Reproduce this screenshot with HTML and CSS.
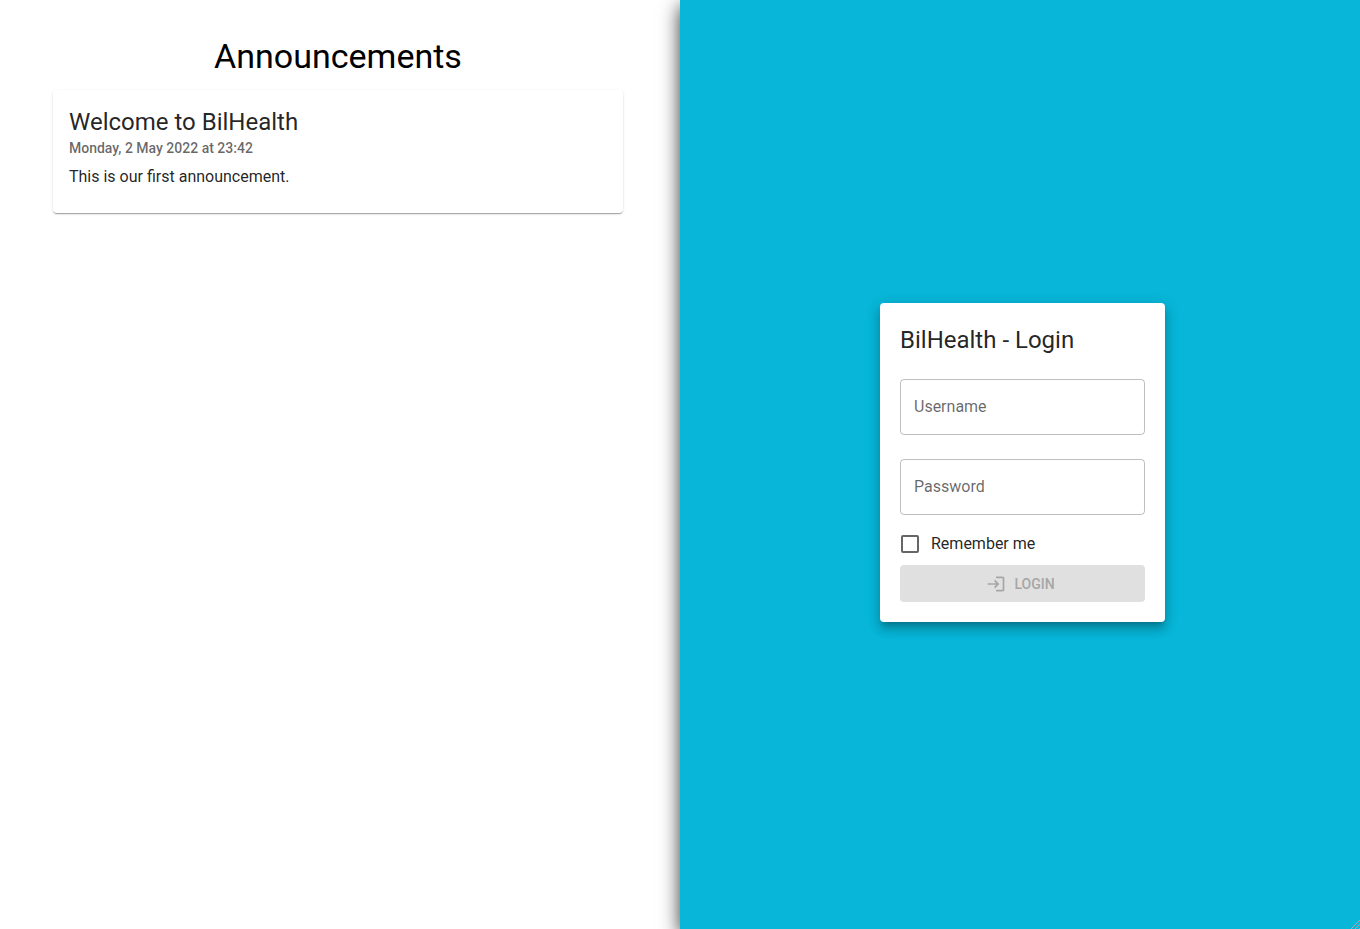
FILE: index.html
```html
<!DOCTYPE html>
<html lang="en">
<head>
<meta charset="utf-8">
<meta name="viewport" content="width=device-width, initial-scale=1">
<title>BilHealth</title>
<link rel="stylesheet" href="styles.css">
</head>
<body>
<div class="landing">
  <main class="news">
    <h1 class="news-title">Announcements</h1>
    <article class="announcement">
      <h2 class="heading">Welcome to BilHealth</h2>
      <time class="announcement-date" datetime="2022-05-02T23:42">Monday, 2 May 2022 at 23:42</time>
      <p class="announcement-body">This is our first announcement.</p>
    </article>
  </main>
  <aside class="side">
    <form class="login">
      <h2 class="heading">BilHealth - Login</h2>
      <div class="field">
        <input class="field-input" id="username" type="text" placeholder=" " autocomplete="username">
        <label class="field-label" for="username">Username</label>
      </div>
      <div class="field">
        <input class="field-input" id="password" type="password" placeholder=" " autocomplete="current-password">
        <label class="field-label" for="password">Password</label>
      </div>
      <div class="actions">
        <label class="remember" for="remember"><input class="remember-box" id="remember" type="checkbox">Remember me</label>
        <button class="submit" type="submit" disabled>
          <svg class="submit-icon" viewBox="0 0 24 24" aria-hidden="true"><path d="M11 7 9.6 8.4l2.6 2.6H2v2h10.2l-2.6 2.6L11 17l5-5-5-5zm9 12h-8v2h8c1.1 0 2-.9 2-2V5c0-1.1-.9-2-2-2h-8v2h8v14z"/></svg>
          LOGIN
        </button>
      </div>
    </form>
    <svg class="corner" viewBox="0 0 10 10" aria-hidden="true"><path d="M0 11 11 0M4 11l7-7M8 11l3-3"/></svg>
  </aside>
</div>
</body>
</html>
```
FILE: styles.css
```css
* {
  box-sizing: border-box;
}

body {
  margin: 0;
  font-family: Roboto, "Liberation Sans", sans-serif;
  font-size: 16px;
  line-height: 24px;
  color: rgba(0, 0, 0, 0.87);
  background: #fff;
}

h1, h2, p {
  margin: 0;
}

.landing {
  display: grid;
  grid-template-columns: 1fr 1fr;
  min-height: 100vh;
}

.news {
  padding: 36px 57px 36px 53px;
}

.news-title {
  margin-bottom: 14px;
  font-size: 34px;
  font-weight: 400;
  line-height: 40px;
  text-align: center;
  color: #000;
}

.heading {
  font-size: 24px;
  font-weight: 400;
  line-height: 32px;
}

.announcement {
  padding: 16px 16px 24px;
  border-radius: 4px;
  background: #fff;
  box-shadow: 0 2px 1px -1px rgba(0, 0, 0, 0.2), 0 1px 1px rgba(0, 0, 0, 0.14), 0 1px 3px rgba(0, 0, 0, 0.12);
}

.announcement-date {
  display: block;
  margin-bottom: 7px;
  font-size: 14px;
  font-weight: 500;
  line-height: 20px;
  color: rgba(0, 0, 0, 0.6);
}

.side {
  position: relative;
  display: flex;
  align-items: center;
  justify-content: center;
  padding: 0 0 4px 5px;
  background: #07b6d8;
  box-shadow: 0 6px 18px rgba(0, 0, 0, 0.8);
}

.login {
  display: flex;
  flex-direction: column;
  gap: 24px;
  width: 285px;
  padding: 21px 20px 20px;
  border-radius: 4px;
  background: #fff;
  box-shadow: 0 5px 5px -3px rgba(0, 0, 0, 0.2), 0 8px 10px 1px rgba(0, 0, 0, 0.14), 0 3px 14px 2px rgba(0, 0, 0, 0.12);
}

.login .heading {
  margin-bottom: -1px;
}

.field {
  display: grid;
  align-items: center;
}

.field-input,
.field-label {
  grid-area: 1 / 1;
}

.field-input {
  width: 100%;
  height: 56px;
  padding: 0 14px;
  border: 1px solid rgba(0, 0, 0, 0.25);
  border-radius: 4px;
  background: transparent;
  font: inherit;
  color: inherit;
}

.field-label {
  padding: 0 14px;
  color: rgba(0, 0, 0, 0.6);
  pointer-events: none;
}

.field-input:not(:placeholder-shown) + .field-label {
  visibility: hidden;
}

.actions {
  display: flex;
  flex-direction: column;
  margin-top: -16px;
}

.remember {
  display: flex;
  align-items: center;
  gap: 12px;
  height: 42px;
  padding-left: 1px;
}

.remember-box {
  appearance: none;
  width: 18px;
  height: 18px;
  margin: 0;
  border: 2px solid #666;
  border-radius: 2px;
}

.remember-box:checked {
  background: #666;
}

.submit {
  display: flex;
  align-items: center;
  justify-content: center;
  gap: 8px;
  height: 37px;
  padding: 0 16px 0 12px;
  border: 0;
  border-radius: 4px;
  background: #e0e0e0;
  font: 500 14px/24px Roboto, "Liberation Sans", sans-serif;
  color: #a6a6a6;
}

.submit-icon {
  width: 20px;
  height: 20px;
  fill: currentColor;
}

.corner {
  position: absolute;
  right: 0;
  bottom: 0;
  width: 10px;
  height: 10px;
  fill: none;
  stroke: #b4a4a4;
}
```
